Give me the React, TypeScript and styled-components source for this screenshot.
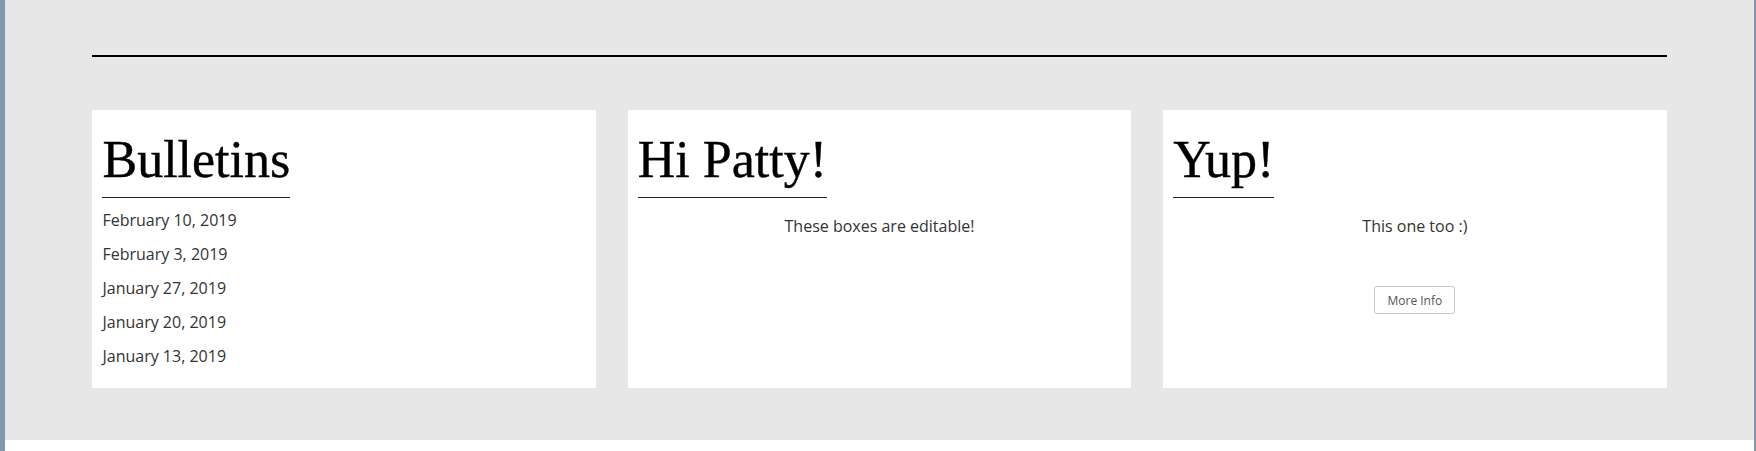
import styled, { createGlobalStyle } from 'styled-components';

const GlobalStyle = createGlobalStyle`
  html, body {
    margin: 0;
    padding: 0;
    background: #fff;
  }
  * {
    box-sizing: border-box;
  }
`;

const bulletins = [
  'February 10, 2019',
  'February 3, 2019',
  'January 27, 2019',
  'January 20, 2019',
  'January 13, 2019',
];

export default function App() {
  return (
    <Frame>
      <GlobalStyle />
      <Band>
        <Inner>
          <Rule />
          <Cards>
            <Card>
              <Heading>Bulletins</Heading>
              <DateList>
                {bulletins.map((d) => (
                  <DateItem key={d}>{d}</DateItem>
                ))}
              </DateList>
            </Card>
            <Card>
              <Heading>Hi Patty!</Heading>
              <Text>These boxes are editable!</Text>
            </Card>
            <Card>
              <Heading>Yup!</Heading>
              <Text>This one too :)</Text>
              <ButtonRow>
                <InfoButton type="button">More Info</InfoButton>
              </ButtonRow>
            </Card>
          </Cards>
        </Inner>
      </Band>
    </Frame>
  );
}

const Frame = styled.div`
  min-height: 100vh;
  border-left: 5px solid #8197b0;
  border-right: 2px solid #8197b0;
  background: #fff;
`;

const Band = styled.section`
  background: #e7e7e7;
  padding: 55px 0 52px;
`;

const Inner = styled.div`
  width: 90%;
  margin: 0 auto;
`;

const Rule = styled.div`
  height: 2px;
  background: #000;
  margin-bottom: 53px;
`;

const Cards = styled.div`
  display: grid;
  grid-template-columns: repeat(3, 1fr);
  gap: 32px;
`;

const Card = styled.div`
  background: #fff;
  padding: 0 10px 20px;
  font-family: 'Open Sans', 'Liberation Sans', sans-serif;
  color: #333;
`;

const Heading = styled.h1`
  display: inline-block;
  margin: 22px 0 0;
  padding-bottom: 10px;
  border-bottom: 1px solid #222;
  font-family: 'Liberation Serif', 'DejaVu Serif', serif;
  font-weight: 400;
  font-size: 52px;
  line-height: 55px;
  color: #000;
  -webkit-text-stroke: 0.4px #000;
`;

const DateList = styled.ul`
  list-style: none;
  margin: 10px 0 0;
  padding: 0;
  display: flex;
  flex-direction: column;
  gap: 10px;
`;

const DateItem = styled.li`
  font-size: 16px;
  line-height: 24px;
`;

const Text = styled.p`
  margin: 16px 0 0;
  text-align: center;
  font-size: 16px;
  line-height: 24px;
`;

const ButtonRow = styled.div`
  display: flex;
  justify-content: center;
  margin-top: 48px;
`;

const InfoButton = styled.button`
  height: 28px;
  padding: 0 12px;
  background: #fff;
  border: 1px solid #c8c8c8;
  border-radius: 3px;
  font-family: 'Open Sans', 'Liberation Sans', sans-serif;
  font-size: 12px;
  color: #555;
  cursor: pointer;
`;
